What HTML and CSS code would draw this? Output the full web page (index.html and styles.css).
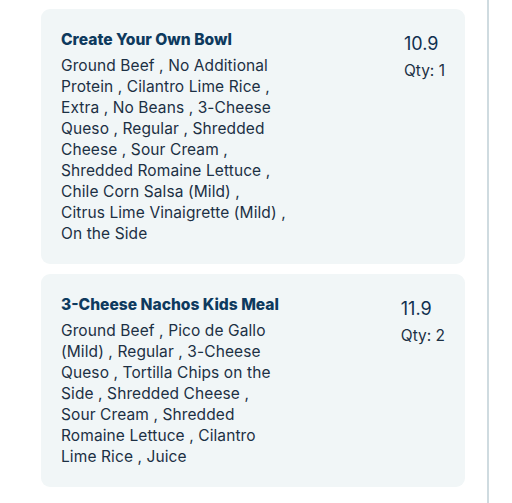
FILE: index.html
```html
<!DOCTYPE html>
<html>
<head>
<meta charset="utf-8">
<link rel="stylesheet" href="styles.css">
</head>
<body>
<div class="page">
  <div class="list">
    <div class="card">
      <div class="info">
        <div class="title">Create Your Own Bowl</div>
        <div class="desc">Ground Beef , No Additional Protein , Cilantro Lime Rice , Extra , No Beans , 3-Cheese Queso , Regular , Shredded Cheese , Sour Cream , Shredded Romaine Lettuce , Chile Corn Salsa (Mild) , Citrus Lime Vinaigrette (Mild) , On the Side</div>
      </div>
      <div class="meta">
        <div class="price">10.9</div>
        <div class="qty">Qty: 1</div>
      </div>
    </div>
    <div class="card">
      <div class="info">
        <div class="title">3-Cheese Nachos Kids Meal</div>
        <div class="desc">Ground Beef , Pico de Gallo (Mild) , Regular , 3-Cheese Queso , Tortilla Chips on the Side , Shredded Cheese , Sour Cream , Shredded Romaine Lettuce , Cilantro Lime Rice , Juice</div>
      </div>
      <div class="meta">
        <div class="price">11.9</div>
        <div class="qty">Qty: 2</div>
      </div>
    </div>
  </div>
  <div class="divider"></div>
</div>
</body>
</html>
```
FILE: styles.css
```css
html, body {
  margin: 0;
  padding: 0;
  background: #ffffff;
}
body {
  font-family: Inter, "Noto Sans", sans-serif;
  color: #1c3044;
}
.page {
  display: flex;
  height: 503px;
  overflow: hidden;
}
.list {
  width: 424px;
  padding: 9px 22px 0 41px;
  display: flex;
  flex-direction: column;
  gap: 10px;
}
.divider {
  width: 2px;
  background: #cfdbe0;
  flex: none;
}
.card {
  background: #f1f6f7;
  border-radius: 9px;
  padding: 20px 20px 20px 20px;
  display: flex;
  justify-content: space-between;
  align-items: flex-start;
}
.info {
  width: 225px;
}
.title {
  font-size: 15.6px;
  font-weight: 800;
  line-height: 21px;
  color: #0e3a5e;
  white-space: nowrap;
}
.desc {
  margin-top: 5px;
  font-size: 15.5px;
  letter-spacing: 0.1px;
  line-height: 21px;
  color: #1c3044;
}
.meta {
  padding-top: 3px;
}
.price {
  font-size: 18px;
  line-height: 24px;
  color: #10304f;
}
.qty {
  margin-top: 4px;
  font-size: 15.5px;
  line-height: 21px;
  color: #1c3044;
}
```
